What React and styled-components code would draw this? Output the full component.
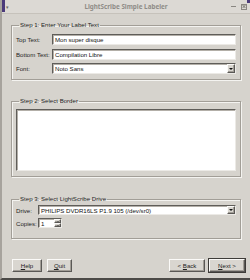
import React from "react";
import styled, { createGlobalStyle, css } from "styled-components";

const Global = createGlobalStyle`
  html, body { margin: 0; padding: 0; background: #d6d3cd; }
  body { font-family: "Liberation Sans", "Noto Sans", sans-serif; font-size: 6.1px; color: #1e1e1e; }
  * { box-sizing: border-box; }
`;

const Window = styled.div`
  width: 250px;
  height: 280px;
  display: flex;
  flex-direction: column;
  background: #d6d3cd;
  border-left: 2px solid #a7a39d;
  border-bottom: 2px solid #4c4a47;
  position: relative;
  overflow: hidden;
`;

const Corner = styled.div`
  position: absolute;
  top: 0;
  ${(p) => (p.$side === "left" ? "left: 0;" : "right: 0;")}
  width: 3px;
  height: ${(p) => (p.$side === "left" ? "12px" : "3px")};
  background: #4b3a7a;
`;

const TitleBar = styled.div`
  height: 14px;
  flex: none;
  display: grid;
  grid-template-columns: 30px 1fr 30px;
  align-items: center;
  background: #dcd9d4;
  border-bottom: 1px solid #c6c2bb;
`;

const MenuGlyph = styled.span`
  font-size: 5px;
  color: #6b6964;
  padding-left: 4px;
`;

const Title = styled.span`
  text-align: center;
  font-family: "Noto Sans", sans-serif;
  font-weight: bold;
  font-size: 6.3px;
  color: #8f8c87;
`;

const WinButtons = styled.span`
  display: flex;
  justify-content: flex-end;
  gap: 5px;
  padding-right: 3px;
  align-items: center;
`;

const Minimize = styled.span`
  width: 5px;
  height: 1px;
  background: #8a8782;
`;

const Close = styled.span`
  width: 6px;
  height: 6px;
  border: 1px solid #8a8782;
  position: relative;
  &::before, &::after {
    content: "";
    position: absolute;
    left: 0;
    top: 1.5px;
    width: 4px;
    height: 1px;
    background: #8a8782;
    transform: rotate(45deg);
  }
  &::after { transform: rotate(-45deg); }
`;

const Content = styled.div`
  flex: 1;
  display: flex;
  flex-direction: column;
  padding: 7px 9px 0 9px;
`;

const Group = styled.fieldset`
  margin: 0 0 ${(p) => p.$gap || 0}px 0;
  height: ${(p) => p.$h}px;
  padding: ${(p) => p.$pad};
  border: 1px solid #a29e97;
  box-shadow: 1px 1px 0 #f4f3f0, inset 1px 1px 0 #f4f3f0;
  min-width: 0;
`;

const Legend = styled.legend`
  line-height: 8px;
  padding: 0 1px;
  margin-left: 3px;
  color: #222;
`;

const FormGrid = styled.div`
  display: grid;
  grid-template-columns: ${(p) => p.$label}px 1fr;
  row-gap: ${(p) => p.$gap}px;
  align-items: center;
`;

const Label = styled.span`
  white-space: nowrap;
`;

const sunken = css`
  background: #fff;
  border-top: 1px solid #5f5d59;
  border-left: 1px solid #5f5d59;
  border-right: 1px solid #eceae6;
  border-bottom: 1px solid #eceae6;
  box-shadow: inset 1px 1px 0 #b3afa8;
`;

const TextField = styled.div`
  ${sunken}
  height: ${(p) => p.$h || 11}px;
  display: flex;
  align-items: center;
  padding-left: 2px;
  white-space: nowrap;
  overflow: hidden;
  color: #111;
  width: ${(p) => (p.$w ? `${p.$w}px` : "auto")};
`;

const raised = css`
  background: #d9d6d0;
  border-top: 1px solid #fbfaf8;
  border-left: 1px solid #fbfaf8;
  border-right: 1px solid #5a5855;
  border-bottom: 1px solid #5a5855;
  box-shadow: inset -1px -1px 0 #a19d96;
`;

const ComboText = styled.span`
  flex: 1;
`;

const ArrowButton = styled.span`
  ${raised}
  width: 8px;
  height: 100%;
  display: flex;
  align-items: center;
  justify-content: center;
  &::after {
    content: "";
    border-left: 2px solid transparent;
    border-right: 2px solid transparent;
    border-top: 2px solid #111;
  }
`;

const SpinButtons = styled.span`
  display: flex;
  flex-direction: column;
  width: 7px;
  height: 100%;
`;

const SpinHalf = styled.span`
  ${raised}
  flex: 1;
  display: flex;
  align-items: center;
  justify-content: center;
  &::after {
    content: "";
    border-left: 1.5px solid transparent;
    border-right: 1.5px solid transparent;
    ${(p) => (p.$up ? "border-bottom: 1.5px solid #444;" : "border-top: 1.5px solid #444;")}
  }
`;

const BorderList = styled.div`
  ${sunken}
  height: 62px;
`;

const ButtonRow = styled.div`
  display: flex;
  align-items: center;
  margin-top: 20px;
  margin-left: 1px;
  margin-right: -4px;
`;

const Spacer = styled.div`
  flex: 1;
`;

const Button = styled.button`
  ${raised}
  ${(p) =>
    p.$default &&
    css`
      outline: 1px solid #3e3c39;
    `}
  width: ${(p) => p.$w}px;
  height: 13px;
  margin-right: ${(p) => p.$mr || 0}px;
  padding: 0;
  font-family: inherit;
  font-size: 6.1px;
  color: #222;
  display: flex;
  align-items: center;
  justify-content: center;
  u { text-decoration: underline; text-underline-offset: 1px; }
`;

export default function App() {
  return (
    <>
      <Global />
      <Window>
        <Corner $side="left" />
        <Corner $side="right" />
        <TitleBar>
          <MenuGlyph>▾</MenuGlyph>
          <Title>LightScribe Simple Labeler</Title>
          <WinButtons>
            <Minimize />
            <Close />
          </WinButtons>
        </TitleBar>
        <Content>
          <Group $h={59} $gap={17} $pad="5px 4px 0 4px">
            <Legend>Step 1: Enter Your Label Text</Legend>
            <FormGrid $label={36} $gap={3.5}>
              <Label>Top Text:</Label>
              <TextField>Mon super disque</TextField>
              <Label>Bottom Text:</Label>
              <TextField>Compilation Libre</TextField>
              <Label>Font:</Label>
              <TextField>
                <ComboText>Noto Sans</ComboText>
                <ArrowButton />
              </TextField>
            </FormGrid>
          </Group>
          <Group $h={80} $gap={18} $pad="4px 4px 0 4px">
            <Legend>Step 2: Select Border</Legend>
            <BorderList />
          </Group>
          <Group $h={44} $pad="2px 4px 0 4px">
            <Legend>Step 3: Select LightScribe Drive</Legend>
            <FormGrid $label={22} $gap={3}>
              <Label>Drive:</Label>
              <TextField $h={10}>
                <ComboText>PHILIPS DVDR16LS P1.9 105 (/dev/sr0)</ComboText>
                <ArrowButton />
              </TextField>
              <Label>Copies:</Label>
              <TextField $h={10} $w={24}>
                <ComboText>1</ComboText>
                <SpinButtons>
                  <SpinHalf $up />
                  <SpinHalf />
                </SpinButtons>
              </TextField>
            </FormGrid>
          </Group>
          <ButtonRow>
            <Button $w={30} $mr={5}>
              <span><u>H</u>elp</span>
            </Button>
            <Button $w={25}>
              <span><u>Q</u>uit</span>
            </Button>
            <Spacer />
            <Button $w={36} $mr={4}>
              <span>&lt; <u>B</u>ack</span>
            </Button>
            <Button $w={36} $default>
              <span><u>N</u>ext &gt;</span>
            </Button>
          </ButtonRow>
        </Content>
      </Window>
    </>
  );
}
